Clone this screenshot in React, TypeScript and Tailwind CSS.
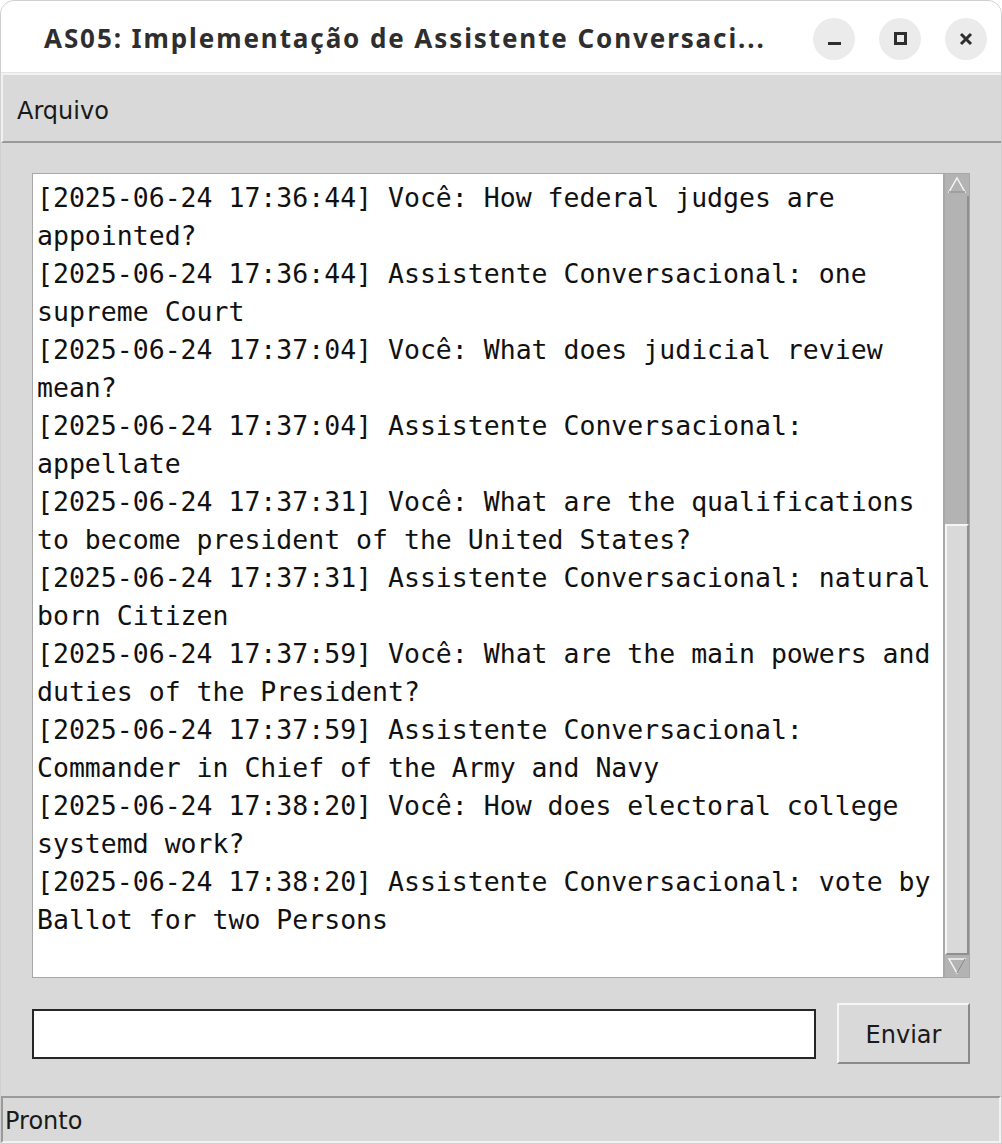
import { useState } from 'react'

const mono = { fontFamily: '"DejaVu Sans Mono", "Liberation Mono", monospace' }

const messages = [
  '[2025-06-24 17:36:44] Você: How federal judges are',
  'appointed?',
  '[2025-06-24 17:36:44] Assistente Conversacional: one',
  'supreme Court',
  '[2025-06-24 17:37:04] Você: What does judicial review',
  'mean?',
  '[2025-06-24 17:37:04] Assistente Conversacional:',
  'appellate',
  '[2025-06-24 17:37:31] Você: What are the qualifications',
  'to become president of the United States?',
  '[2025-06-24 17:37:31] Assistente Conversacional: natural',
  'born Citizen',
  '[2025-06-24 17:37:59] Você: What are the main powers and',
  'duties of the President?',
  '[2025-06-24 17:37:59] Assistente Conversacional:',
  'Commander in Chief of the Army and Navy',
  '[2025-06-24 17:38:20] Você: How does electoral college',
  'systemd work?',
  '[2025-06-24 17:38:20] Assistente Conversacional: vote by',
  'Ballot for two Persons',
]

function WinButton({ children }: { children: React.ReactNode }) {
  return (
    <div className="flex h-[42px] w-[42px] items-center justify-center rounded-full bg-[#ebebeb]">
      {children}
    </div>
  )
}

export default function App() {
  const [text, setText] = useState('')

  return (
    <div
      className="flex h-[1144px] w-[1002px] flex-col overflow-hidden rounded-t-[14px] border border-[#d0d0d0] bg-[#d9d9d9]"
      style={{ fontFamily: '"DejaVu Sans", sans-serif' }}
    >
      {/* barra de título */}
      <div className="flex h-[72px] shrink-0 items-center justify-between border-b border-[#e4e4e4] bg-white pl-[43px] pr-[14px] pt-[4px]">
        <span
          className="text-[26px] font-bold tracking-[1.9px] text-[#2e2e2e]"
          style={{ fontFamily: '"Noto Sans", sans-serif' }}
        >
          AS05: Implementação de Assistente Conversaci...
        </span>
        <div className="flex items-center gap-[24px]">
          <WinButton>
            <div className="mt-[10px] h-[3px] w-[13px] bg-[#2e2e2e]" />
          </WinButton>
          <WinButton>
            <div className="h-[13px] w-[13px] border-[3px] border-[#2e2e2e]" />
          </WinButton>
          <WinButton>
            <svg width="16" height="16" viewBox="0 0 16 16">
              <path d="M3 3 L13 13 M13 3 L3 13" stroke="#2e2e2e" strokeWidth="3" />
            </svg>
          </WinButton>
        </div>
      </div>

      {/* menu */}
      <div className="flex h-[70px] shrink-0 items-center border-b-2 border-l-2 border-t-2 border-b-[#9a9a9a] border-l-[#f2f2f2] border-t-[#f2f2f2] pl-[14px] pt-[5px]">
        <span className="text-[24px] text-[#1a1a1a]">Arquivo</span>
      </div>

      {/* conversa */}
      <div className="flex flex-1 flex-col px-[31px] pt-[30px]">
        <div className="flex h-[805px]">
          <div className="flex-1 overflow-hidden border border-[#a8a8a8] bg-white pl-[4px] pt-[5px]">
            <div className="text-[26.5px] leading-[38px] text-[#111]" style={mono}>
              {messages.map((m, i) => (
                <div key={i} className="whitespace-pre">{m}</div>
              ))}
            </div>
          </div>
          {/* barra de rolagem */}
          <div className="flex w-[26px] flex-col border border-[#a8a8a8] bg-[#d9d9d9]">
            <div className="flex h-[22px] items-center justify-center bg-[#b3b3b3]">
              <svg width="20" height="18" viewBox="0 0 20 18">
                <path d="M10 2 L18 16 L2 16 Z" fill="#b3b3b3" stroke="#f5f5f5" strokeWidth="1.5" />
                <path d="M18 16 L2 16" stroke="#8a8a8a" strokeWidth="1.5" />
              </svg>
            </div>
            <div className="h-[328px] border-r-2 border-[#8f8f8f] bg-[#b3b3b3]" />
            <div className="flex-1 border-b-2 border-l-2 border-r-2 border-t-2 border-b-[#8f8f8f] border-l-[#f5f5f5] border-r-[#8f8f8f] border-t-[#f5f5f5]" />
            <div className="flex h-[22px] items-center justify-center bg-[#b3b3b3]">
              <svg width="20" height="18" viewBox="0 0 20 18">
                <path d="M2 2 L18 2 L10 16 Z" fill="#b3b3b3" stroke="#f5f5f5" strokeWidth="1.5" />
                <path d="M18 2 L10 16" stroke="#8a8a8a" strokeWidth="1.5" />
              </svg>
            </div>
          </div>
        </div>

        {/* entrada */}
        <div className="mt-[25px] flex items-center justify-between">
          <input
            type="text"
            value={text}
            onChange={(e) => setText(e.target.value)}
            className="h-[50px] w-[784px] border-2 border-[#262626] bg-white px-2 text-[22px] outline-none"
          />
          <button
            type="button"
            className="h-[61px] w-[133px] border-b-2 border-l-2 border-r-2 border-t-2 border-b-[#8a8a8a] border-l-[#f5f5f5] border-r-[#8a8a8a] border-t-[#f5f5f5] bg-[#d9d9d9] pt-[3px] text-[24px] text-[#1a1a1a]"
          >
            Enviar
          </button>
        </div>
      </div>

      {/* status */}
      <div className="flex h-[47px] shrink-0 items-center border-b-2 border-l-2 border-r-2 border-t-2 border-b-[#f2f2f2] border-l-[#9a9a9a] border-r-[#f2f2f2] border-t-[#9a9a9a] pl-[2px] pt-[3px]">
        <span className="text-[24px] text-[#1a1a1a]">Pronto</span>
      </div>
    </div>
  )
}
